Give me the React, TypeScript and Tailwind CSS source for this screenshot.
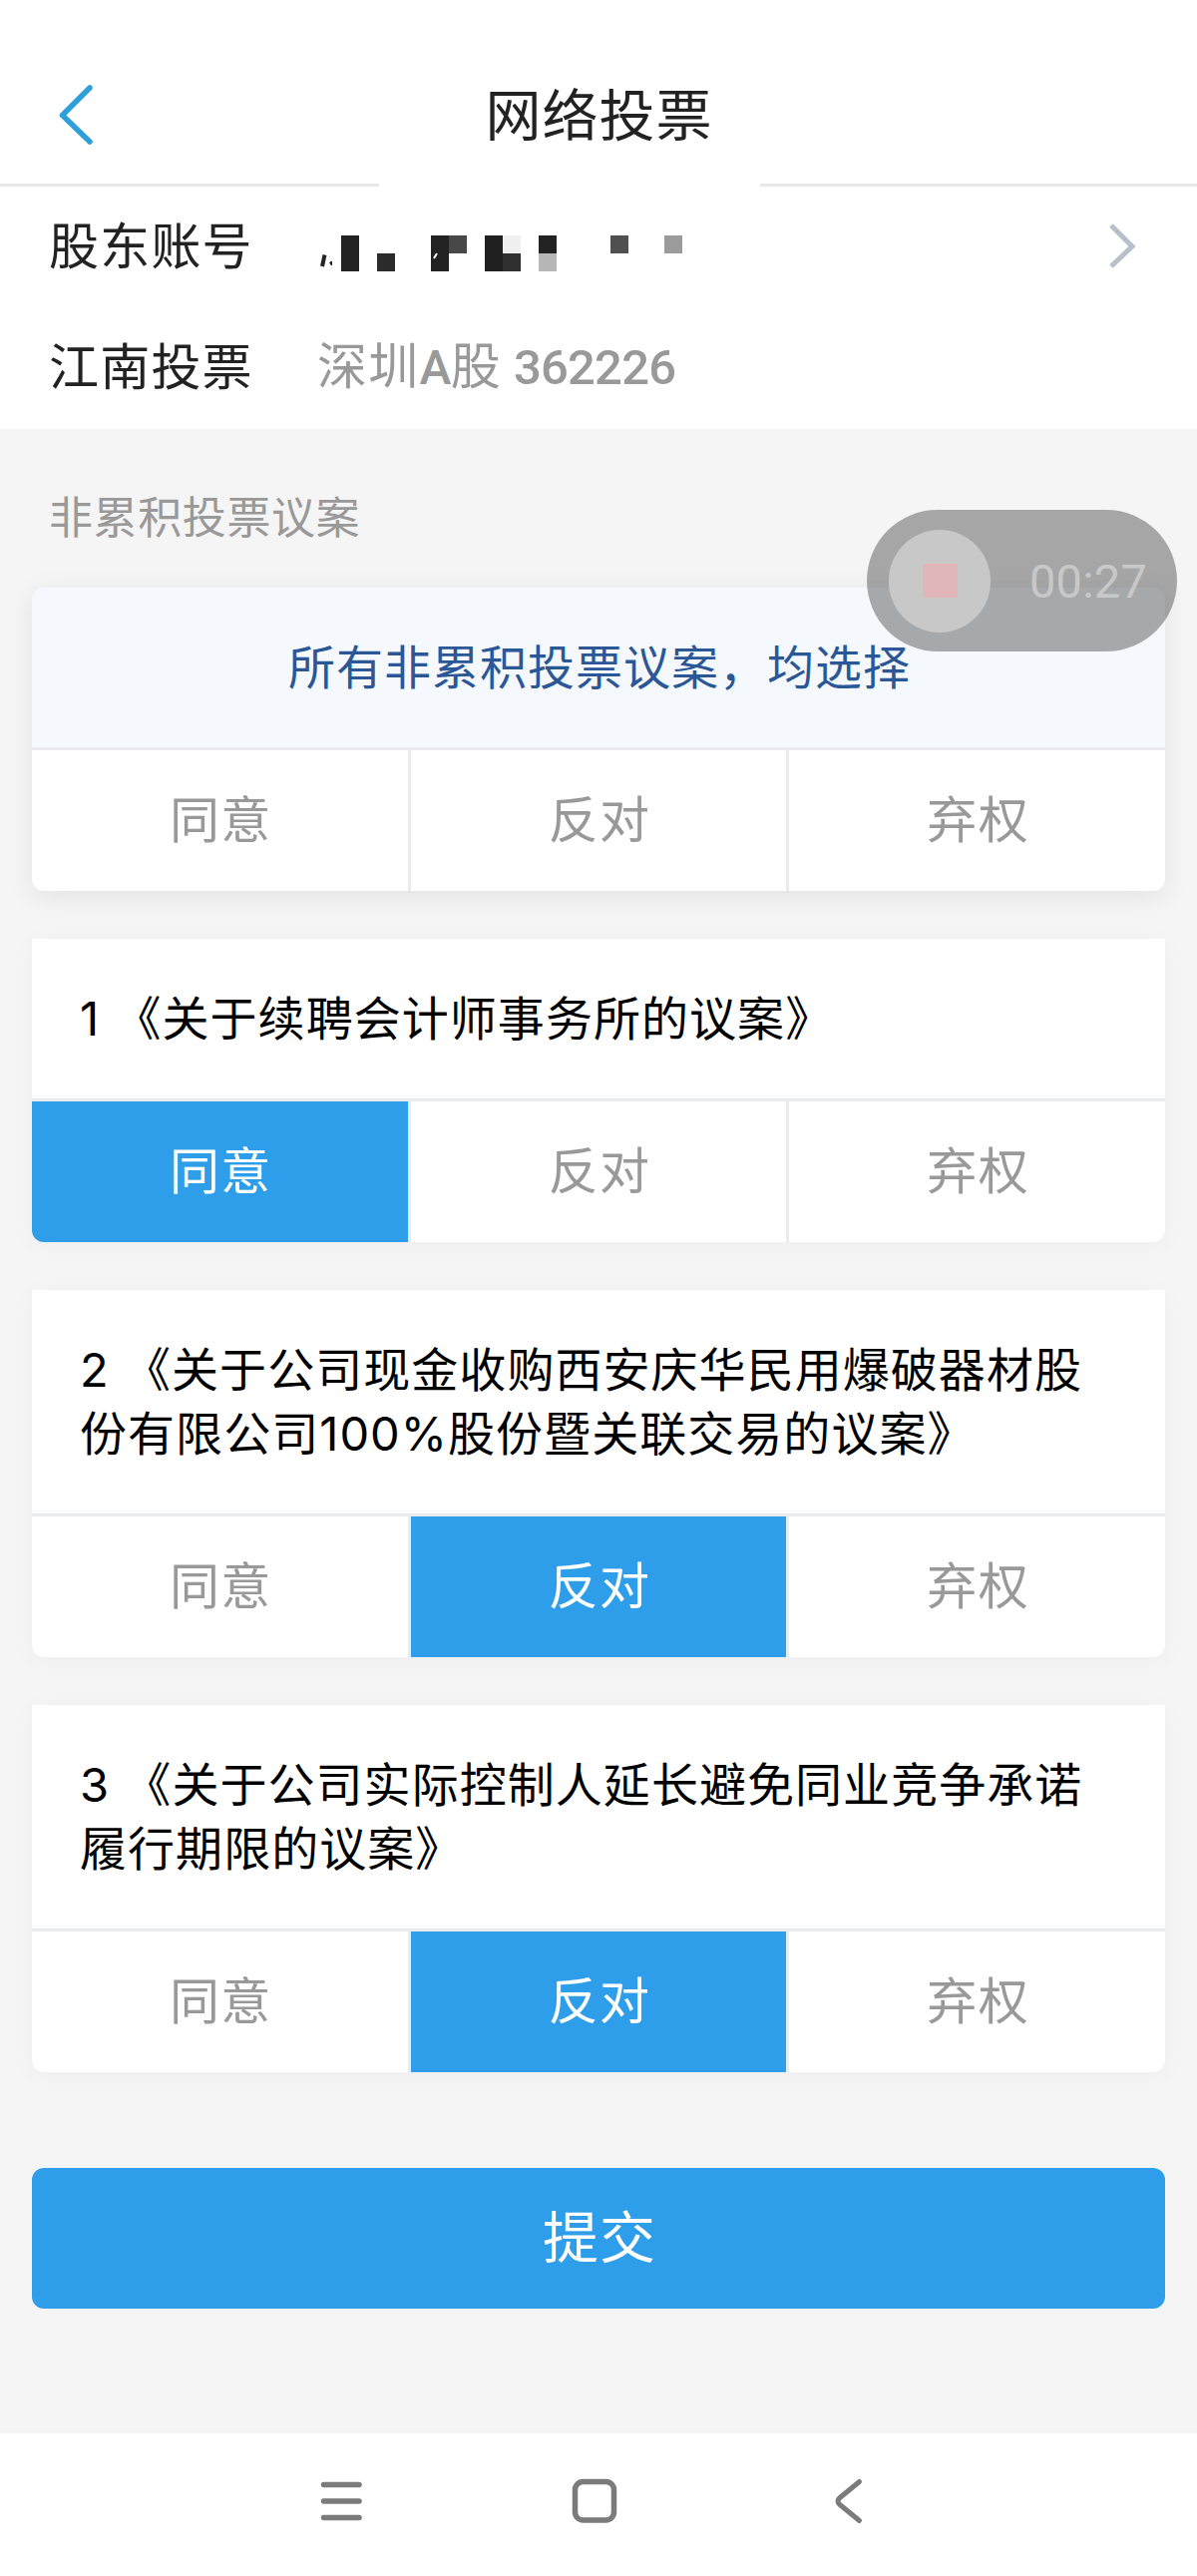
import { useState } from "react";

type Choice = "agree" | "oppose" | "abstain";

interface Proposal {
  id: number;
  title: string;
}

const proposals: Proposal[] = [
  { id: 1, title: "《关于续聘会计师事务所的议案》" },
  {
    id: 2,
    title: "《关于公司现金收购西安庆华民用爆破器材股份有限公司100%股份暨关联交易的议案》",
  },
  { id: 3, title: "《关于公司实际控制人延长避免同业竞争承诺履行期限的议案》" },
];

const options: { key: Choice; label: string }[] = [
  { key: "agree", label: "同意" },
  { key: "oppose", label: "反对" },
  { key: "abstain", label: "弃权" },
];

function VoteOptions({
  value,
  onChange,
}: {
  value: Choice | null;
  onChange: (choice: Choice) => void;
}) {
  return (
    <div className="grid h-[144px] grid-cols-3 gap-x-[3px] border-t-[3px] border-[#e9ebec] bg-[#e9ebec]">
      {options.map((option) => (
        <button
          key={option.key}
          onClick={() => onChange(option.key)}
          className={`pb-px pl-[2px] text-[50px] leading-none tracking-[1.3px] ${
            value === option.key
              ? "bg-[#2f9eea] text-white"
              : "bg-white text-[#999]"
          }`}
        >
          {option.label}
        </button>
      ))}
    </div>
  );
}

// Account number, hidden behind a mosaic
function MaskedAccount() {
  return (
    <svg width="370" height="36" viewBox="0 0 370 36" shapeRendering="crispEdges">
      <path d="M5.500 19.500L3 31" stroke="#222" strokeWidth="4" shapeRendering="auto" />
      <path d="M10.500 27.500l2-1.500v4z" fill="#222" stroke="#222" shapeRendering="auto" />
      <rect x="22" y="0" width="18" height="36" fill="#222" />
      <rect x="58" y="18" width="18" height="18" fill="#2b2b2b" />
      <rect x="112" y="0" width="18" height="36" fill="#222" />
      <path d="M118 18l-3 5" stroke="#fff" strokeWidth="2" shapeRendering="auto" />
      <rect x="130" y="0" width="18" height="18" fill="#484848" />
      <rect x="166" y="0" width="18" height="36" fill="#202020" />
      <rect x="184" y="0" width="18" height="18" fill="#f0f0f0" />
      <rect x="184" y="18" width="18" height="18" fill="#303030" />
      <rect x="220" y="0" width="18" height="18" fill="#222" />
      <rect x="220" y="18" width="18" height="18" fill="#b6b6b6" />
      <rect x="292" y="0" width="18" height="18" fill="#505050" />
      <rect x="346" y="0" width="18" height="18" fill="#9b9b9b" />
    </svg>
  );
}

function RecorderBadge() {
  return (
    <div className="absolute left-[869px] top-[511px] flex h-[142px] w-[311px] items-center rounded-full bg-black/32 pl-[22px]">
      <div className="flex h-[103px] w-[102px] items-center justify-center rounded-full bg-[#c8c8c8]">
        <div className="h-[34px] w-[35px] bg-[#e0b6b8]" />
      </div>
      <span className="ml-[39px] font-[Roboto] text-[47px] leading-none tracking-[0.200px] text-[#c8c8c8]">
        00:27
      </span>
    </div>
  );
}

export default function App() {
  const [votes, setVotes] = useState<Record<number, Choice>>({
    1: "agree",
    2: "oppose",
    3: "oppose",
  });

  const setAll = (choice: Choice) =>
    setVotes({ 1: choice, 2: choice, 3: choice });

  return (
    <div className="relative flex h-[2582px] w-[1200px] flex-col bg-[#f5f5f5] font-[Inter,'Noto_Sans_CJK_SC',sans-serif] text-[#222]">
      <header className="bg-white">
        <div className="grid h-[184px] grid-cols-[1fr_auto_1fr] items-center pt-[46px]">
          <svg className="ml-[56px]" width="40" height="64" viewBox="0 0 40 64" fill="none">
            <path
              d="M34 5L6.500 32.500L34 59"
              stroke="#2f9fdc"
              strokeWidth="5.500"
              strokeLinecap="round"
              strokeLinejoin="round"
            />
          </svg>
          <h1 className="pl-px pt-[2px] text-[56px] leading-none tracking-[1px]">
            网络投票
          </h1>
        </div>
        <div className="flex justify-between">
          <span className="h-[3px] w-[380px] bg-[#e8e8e8]" />
          <span className="h-[3px] w-[438px] bg-[#e8e8e8]" />
        </div>
      </header>

      <section className="h-[243px] bg-white pl-[49px] text-[50px] leading-none tracking-[1.2px]">
        <div className="flex h-[118px] items-center">
          <span className="w-[271px] pt-[2px]">股东账号</span>
          <span className="pt-[16px]">
            <MaskedAccount />
          </span>
          <svg className="ml-auto mr-[57px]" width="32" height="48" viewBox="0 0 32 48" fill="none">
            <path d="M3 4L24 25L3 45" stroke="#b7c0ca" strokeWidth="5" />
          </svg>
        </div>
        <div className="flex h-[125px] items-center">
          <span className="w-[269px] pt-px">江南投票</span>
          <span className="pt-px font-[Roboto,'Noto_Sans_CJK_SC',sans-serif] text-[#999]">
            深圳
            <span className="text-[48px] font-medium tracking-[-0.500px]">A</span>股
            <span className="ml-[12px] text-[49px] font-medium tracking-[-0.800px]">
              362226
            </span>
          </span>
        </div>
      </section>

      <main className="flex flex-col px-8">
        <h2 className="mt-[67px] pl-[17px] text-[44px] leading-[44px] tracking-[0.600px] text-[#999]">
          非累积投票议案
        </h2>

        <div className="mt-[48px] overflow-hidden rounded-xl shadow-[0_6px_28px_rgba(0,0,0,0.08)]">
          <div className="flex h-[160px] items-center justify-center bg-[#f5f9fe] pb-[2px] pl-[2px] text-[47px] leading-none tracking-[1px] text-[#2b5796]">
            所有非累积投票议案，均选择
          </div>
          <VoteOptions value={null} onChange={setAll} />
        </div>

        {proposals.map((proposal) => (
          <div
            key={proposal.id}
            className="mt-12 overflow-hidden rounded-b-xl shadow-[0_4px_28px_rgba(0,0,0,0.03)]"
          >
            <p className="bg-white p-12 text-[47px] leading-[64px] tracking-[1.050px] text-black">
              {`${proposal.id} ${proposal.title}`}
            </p>
            <VoteOptions
              value={votes[proposal.id]}
              onChange={(choice) =>
                setVotes({ ...votes, [proposal.id]: choice })
              }
            />
          </div>
        ))}

        <button className="mt-24 h-[141px] rounded-xl bg-[#2f9eea] pb-px pl-[2px] text-[56px] leading-none tracking-[1px] text-white">
          提交
        </button>
      </main>

      <nav className="mt-auto h-[143px] bg-white">
        <svg width="1200" height="143" viewBox="0 0 1200 143" fill="none" stroke="#7b7b7b" strokeWidth="5.500" strokeLinecap="round">
          <path d="M324.500 51.500H360M324.500 68H360M324.500 84.500H360" />
          <rect x="576.500" y="48.500" width="39" height="38.500" rx="8" />
          <path d="M861.500 48.500L842 64.500Q838 68 842 71.500L861.500 87.500" strokeWidth="5" />
        </svg>
      </nav>

      <RecorderBadge />
    </div>
  );
}
